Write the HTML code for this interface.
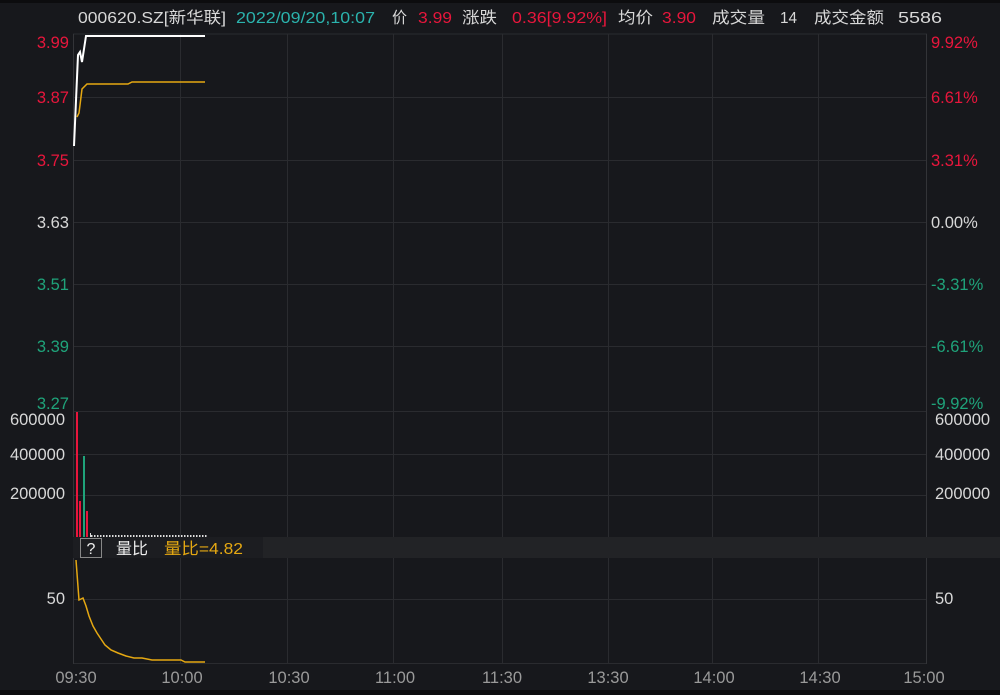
<!DOCTYPE html>
<html><head><meta charset="utf-8"><style>
body{margin:0;background:#17181c;}
svg{display:block;font-family:"Liberation Sans","Noto Sans CJK SC",sans-serif;}
</style></head><body>
<svg width="1000" height="695" viewBox="0 0 1000 695" xmlns="http://www.w3.org/2000/svg">
<rect width="1000" height="695" fill="#17181c"/>
<rect x="0" y="0" width="1000" height="3" fill="#0c0c0e"/>
<rect x="0" y="690" width="1000" height="5" fill="#0c0c0e"/>
<g stroke="#2a2b2f" stroke-width="1" fill="none">
<line x1="73" y1="34" x2="927" y2="34"/>
<line x1="73" y1="97.5" x2="927" y2="97.5"/>
<line x1="73" y1="160.5" x2="927" y2="160.5"/>
<line x1="73" y1="222.5" x2="927" y2="222.5"/>
<line x1="73" y1="284.5" x2="927" y2="284.5"/>
<line x1="73" y1="346.5" x2="927" y2="346.5"/>
<line x1="73" y1="411.5" x2="927" y2="411.5"/>
<line x1="73" y1="454.5" x2="927" y2="454.5"/>
<line x1="73" y1="495.5" x2="927" y2="495.5"/>
<line x1="73" y1="599.5" x2="927" y2="599.5"/>
<line x1="73" y1="663.5" x2="927" y2="663.5"/>
<line x1="180.5" y1="34" x2="180.5" y2="664"/>
<line x1="287.5" y1="34" x2="287.5" y2="664"/>
<line x1="393.5" y1="34" x2="393.5" y2="664"/>
<line x1="502.5" y1="34" x2="502.5" y2="664"/>
<line x1="608.5" y1="34" x2="608.5" y2="664"/>
<line x1="712.5" y1="34" x2="712.5" y2="664"/>
<line x1="818.5" y1="34" x2="818.5" y2="664"/>
<line x1="73.5" y1="34" x2="73.5" y2="664" stroke="#333438"/>
<line x1="926.5" y1="34" x2="926.5" y2="664" stroke="#333438"/>
</g>
<rect x="73" y="537" width="927" height="21" fill="#222326"/>
<!-- header -->
<g font-size="16" fill="#d8d8d8" lengthAdjust="spacingAndGlyphs">
<text x="78" y="23" textLength="148" lengthAdjust="spacingAndGlyphs">000620.SZ[新华联]</text>
<text x="236" y="23" fill="#2bb3ad" textLength="139" lengthAdjust="spacingAndGlyphs">2022/09/20,10:07</text>
<text x="392" y="23" textLength="15" lengthAdjust="spacingAndGlyphs">价</text>
<text x="418" y="23" fill="#e8163c" textLength="34" lengthAdjust="spacingAndGlyphs">3.99</text>
<text x="462" y="23" textLength="35" lengthAdjust="spacingAndGlyphs">涨跌</text>
<text x="512" y="23" fill="#e8163c" textLength="95" lengthAdjust="spacingAndGlyphs">0.36[9.92%]</text>
<text x="618" y="23" textLength="35" lengthAdjust="spacingAndGlyphs">均价</text>
<text x="662" y="23" fill="#e8163c" textLength="34" lengthAdjust="spacingAndGlyphs">3.90</text>
<text x="712" y="23" textLength="53" lengthAdjust="spacingAndGlyphs">成交量</text>
<text x="780" y="23" textLength="17" lengthAdjust="spacingAndGlyphs">14</text>
<text x="814" y="23" textLength="70" lengthAdjust="spacingAndGlyphs">成交金额</text>
<text x="898" y="23" textLength="44" lengthAdjust="spacingAndGlyphs">5586</text>
</g>
<!-- left axis -->
<g font-size="16.5" text-anchor="end">
<text x="69" y="48" fill="#e8163c">3.99</text>
<text x="69" y="103" fill="#e8163c">3.87</text>
<text x="69" y="166" fill="#e8163c">3.75</text>
<text x="69" y="228" fill="#d8d8d8">3.63</text>
<text x="69" y="290" fill="#1fa37a">3.51</text>
<text x="69" y="352" fill="#1fa37a">3.39</text>
<text x="69" y="409" fill="#1fa37a">3.27</text>
<text x="65" y="425" fill="#d8d8d8">600000</text>
<text x="65" y="460" fill="#d8d8d8">400000</text>
<text x="65" y="499" fill="#d8d8d8">200000</text>
<text x="65" y="604" fill="#d8d8d8">50</text>
</g>
<g font-size="16.5">
<text x="931" y="48" fill="#e8163c">9.92%</text>
<text x="931" y="103" fill="#e8163c">6.61%</text>
<text x="931" y="166" fill="#e8163c">3.31%</text>
<text x="931" y="228" fill="#d8d8d8">0.00%</text>
<text x="931" y="290" fill="#1fa37a">-3.31%</text>
<text x="931" y="352" fill="#1fa37a">-6.61%</text>
<text x="931" y="409" fill="#1fa37a">-9.92%</text>
<text x="935" y="425" fill="#d8d8d8">600000</text>
<text x="935" y="460" fill="#d8d8d8">400000</text>
<text x="935" y="499" fill="#d8d8d8">200000</text>
<text x="935" y="604" fill="#d8d8d8">50</text>
</g>
<g font-size="16.5" fill="#9a9a9a" text-anchor="middle">
<text x="76" y="683">09:30</text>
<text x="182" y="683">10:00</text>
<text x="289" y="683">10:30</text>
<text x="395" y="683">11:00</text>
<text x="502" y="683">11:30</text>
<text x="608" y="683">13:30</text>
<text x="714" y="683">14:00</text>
<text x="820" y="683">14:30</text>
<text x="924" y="683">15:00</text>
</g>
<!-- price line -->
<polyline fill="none" stroke="#ffffff" stroke-width="2" points="74,146 78,55 80,52 82,62 86,36 205,36"/>
<polyline fill="none" stroke="#e5a812" stroke-width="1.5" points="77,117 79,113 82,89 87,84 128,84 132,82 205,82"/>
<!-- volume bars -->
<rect x="76" y="412" width="2" height="125" fill="#e8163c"/>
<rect x="79" y="501" width="2" height="36" fill="#e8163c"/>
<rect x="83" y="456" width="2" height="81" fill="#1fa37a"/>
<rect x="86" y="511" width="2" height="26" fill="#e8163c"/>
<rect x="90" y="533" width="1" height="4" fill="#ddd"/>
<line x1="91" y1="536" x2="207" y2="536" stroke="#ddd" stroke-width="2" stroke-dasharray="1.5,1.5"/>
<!-- ratio bar -->
<rect x="73" y="537" width="190" height="21" fill="#1c1d21"/>
<rect x="80.5" y="538.5" width="21" height="19" fill="none" stroke="#888" stroke-width="1"/>
<text x="91" y="554" font-size="16" fill="#eee" text-anchor="middle">?</text>
<text x="116" y="554" font-size="16" fill="#eee">量比</text>
<text x="164" y="554" font-size="16" fill="#e5a812" textLength="79" lengthAdjust="spacingAndGlyphs">量比=4.82</text>
<polyline fill="none" stroke="#e5a812" stroke-width="1.5" points="76,560 79,600 81,599 83,598 86,606 89,616 93,626 97,633 101,639 105,645 111,650 118,653 126,656 134,658 142,658 152,660 163,660 172,660 181,660 185,662 205,662"/>
</svg>
</body></html>
